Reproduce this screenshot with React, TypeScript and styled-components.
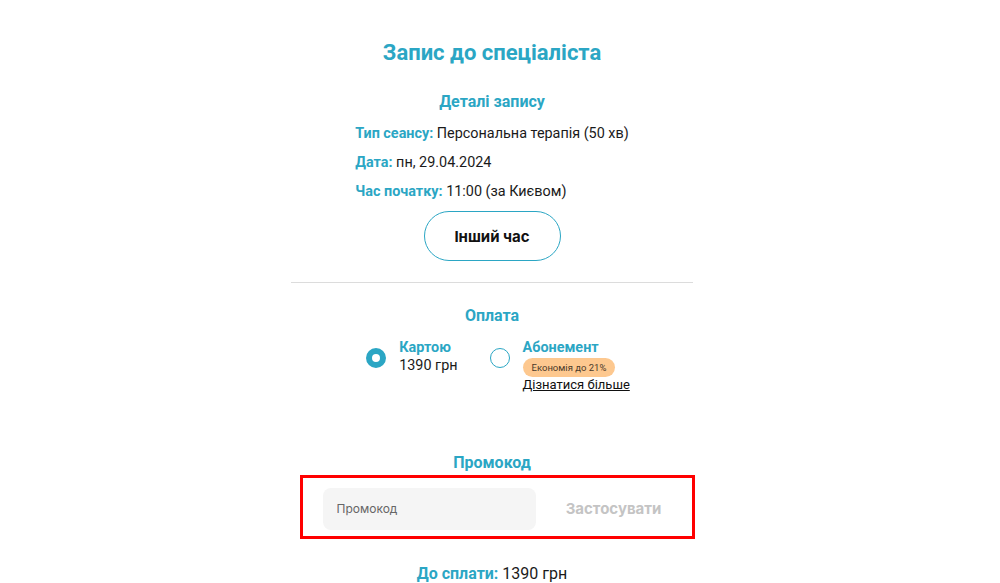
import styled, { createGlobalStyle } from "styled-components";

const Global = createGlobalStyle`
  body {
    margin: 0;
    background: #ffffff;
    font-family: Roboto, "Liberation Sans", sans-serif;
    color: #1a1a1a;
  }
`;

const accent = "#2ba6c4";

const Page = styled.div`
  display: flex;
  justify-content: center;
  padding-right: 16px;
  padding-top: 38px;
`;

const Column = styled.div`
  width: 402px;
  display: flex;
  flex-direction: column;
  align-items: center;
`;

const Title = styled.h1`
  margin: 0;
  font-size: 22px;
  font-weight: 700;
  color: ${accent};
  line-height: 30px;
`;

const SectionTitle = styled.h2<{ top: number }>`
  margin: ${(p) => p.top}px 0 0;
  font-size: 16px;
  font-weight: 700;
  color: ${accent};
  line-height: 22px;
`;

const Details = styled.div`
  margin-top: 12px;
  display: flex;
  flex-direction: column;
  gap: 11px;
`;

const DetailRow = styled.div`
  font-size: 14.4px;
  line-height: 18px;
`;

const Label = styled.span`
  color: ${accent};
  font-weight: 700;
`;

const OutlineButton = styled.button`
  margin-top: 10px;
  width: 137px;
  height: 50px;
  border: 1px solid ${accent};
  border-radius: 25px;
  background: #fff;
  font-family: Inter, "Noto Sans", sans-serif;
  font-size: 15px;
  font-weight: 700;
  color: #111;
  cursor: pointer;
`;

const Divider = styled.hr`
  width: 100%;
  margin: 21px 0 0;
  border: 0;
  border-top: 1px solid #dcdcdc;
`;

const Options = styled.div`
  margin-top: 12px;
  display: flex;
  gap: 32px;
  padding-left: 12px;
`;

const Option = styled.label`
  display: flex;
  gap: 13px;
  align-items: flex-start;
  cursor: pointer;
`;

const Radio = styled.span<{ checked?: boolean }>`
  margin-top: 9px;
  box-sizing: border-box;
  width: 20px;
  height: 20px;
  border-radius: 50%;
  border: ${(p) => (p.checked ? "6px" : "1px")} solid ${accent};
  flex-shrink: 0;
`;

const OptionBody = styled.div`
  display: flex;
  flex-direction: column;
  align-items: flex-start;
`;

const OptionName = styled.span`
  color: ${accent};
  font-weight: 700;
  font-size: 14.4px;
  line-height: 18px;
`;

const Price = styled.span`
  font-size: 14.4px;
  line-height: 18px;
`;

const Badge = styled.span`
  margin: 1px 0 0;
  padding: 0 9px;
  height: 19px;
  line-height: 19px;
  border-radius: 10px;
  background: #fdc88f;
  font-size: 9.5px;
  color: #4a3a2a;
`;

const MoreLink = styled.a`
  font-size: 13px;
  line-height: 16px;
  color: #111;
  text-decoration: underline;
`;

const PromoBox = styled.div`
  margin-top: 1px;
  margin-left: 10px;
  box-sizing: border-box;
  width: 395px;
  height: 64px;
  border: 3px solid #ff0000;
  display: flex;
  align-items: center;
  padding: 3px 0 0 20px;
`;

const PromoInput = styled.input`
  box-sizing: border-box;
  width: 213px;
  height: 42px;
  border: 0;
  border-radius: 8px;
  background: #f5f5f5;
  padding: 0 14px;
  font-family: Inter, "Noto Sans", sans-serif;
  font-size: 12px;
  color: #333;
  outline: none;
  &::placeholder {
    color: #666;
  }
`;

const ApplyButton = styled.button`
  flex: 1;
  height: 42px;
  border: 0;
  background: transparent;
  font-family: Inter, "Noto Sans", sans-serif;
  font-size: 15px;
  font-weight: 700;
  color: #c4c4c4;
`;

const Total = styled.div`
  margin-top: 25px;
  font-size: 16px;
  line-height: 20px;
`;

export default function App() {
  return (
    <>
      <Global />
      <Page>
        <Column>
          <Title>Запис до спеціаліста</Title>
          <SectionTitle top={23}>Деталі запису</SectionTitle>
          <Details>
            <DetailRow>
              <Label>Тип сеансу:</Label> Персональна терапія (50 хв)
            </DetailRow>
            <DetailRow>
              <Label>Дата:</Label> пн, 29.04.2024
            </DetailRow>
            <DetailRow>
              <Label>Час початку:</Label> 11:00 (за Києвом)
            </DetailRow>
          </Details>
          <OutlineButton>Інший час</OutlineButton>
          <Divider />
          <SectionTitle top={22}>Оплата</SectionTitle>
          <Options>
            <Option>
              <Radio checked />
              <OptionBody>
                <OptionName>Картою</OptionName>
                <Price>1390 грн</Price>
              </OptionBody>
            </Option>
            <Option>
              <Radio />
              <OptionBody>
                <OptionName>Абонемент</OptionName>
                <Badge>Економія до 21%</Badge>
                <MoreLink href="#">Дізнатися більше</MoreLink>
              </OptionBody>
            </Option>
          </Options>
          <SectionTitle top={59}>Промокод</SectionTitle>
          <PromoBox>
            <PromoInput placeholder="Промокод" />
            <ApplyButton>Застосувати</ApplyButton>
          </PromoBox>
          <Total>
            <Label>До сплати:</Label> 1390 грн
          </Total>
        </Column>
      </Page>
    </>
  );
}
